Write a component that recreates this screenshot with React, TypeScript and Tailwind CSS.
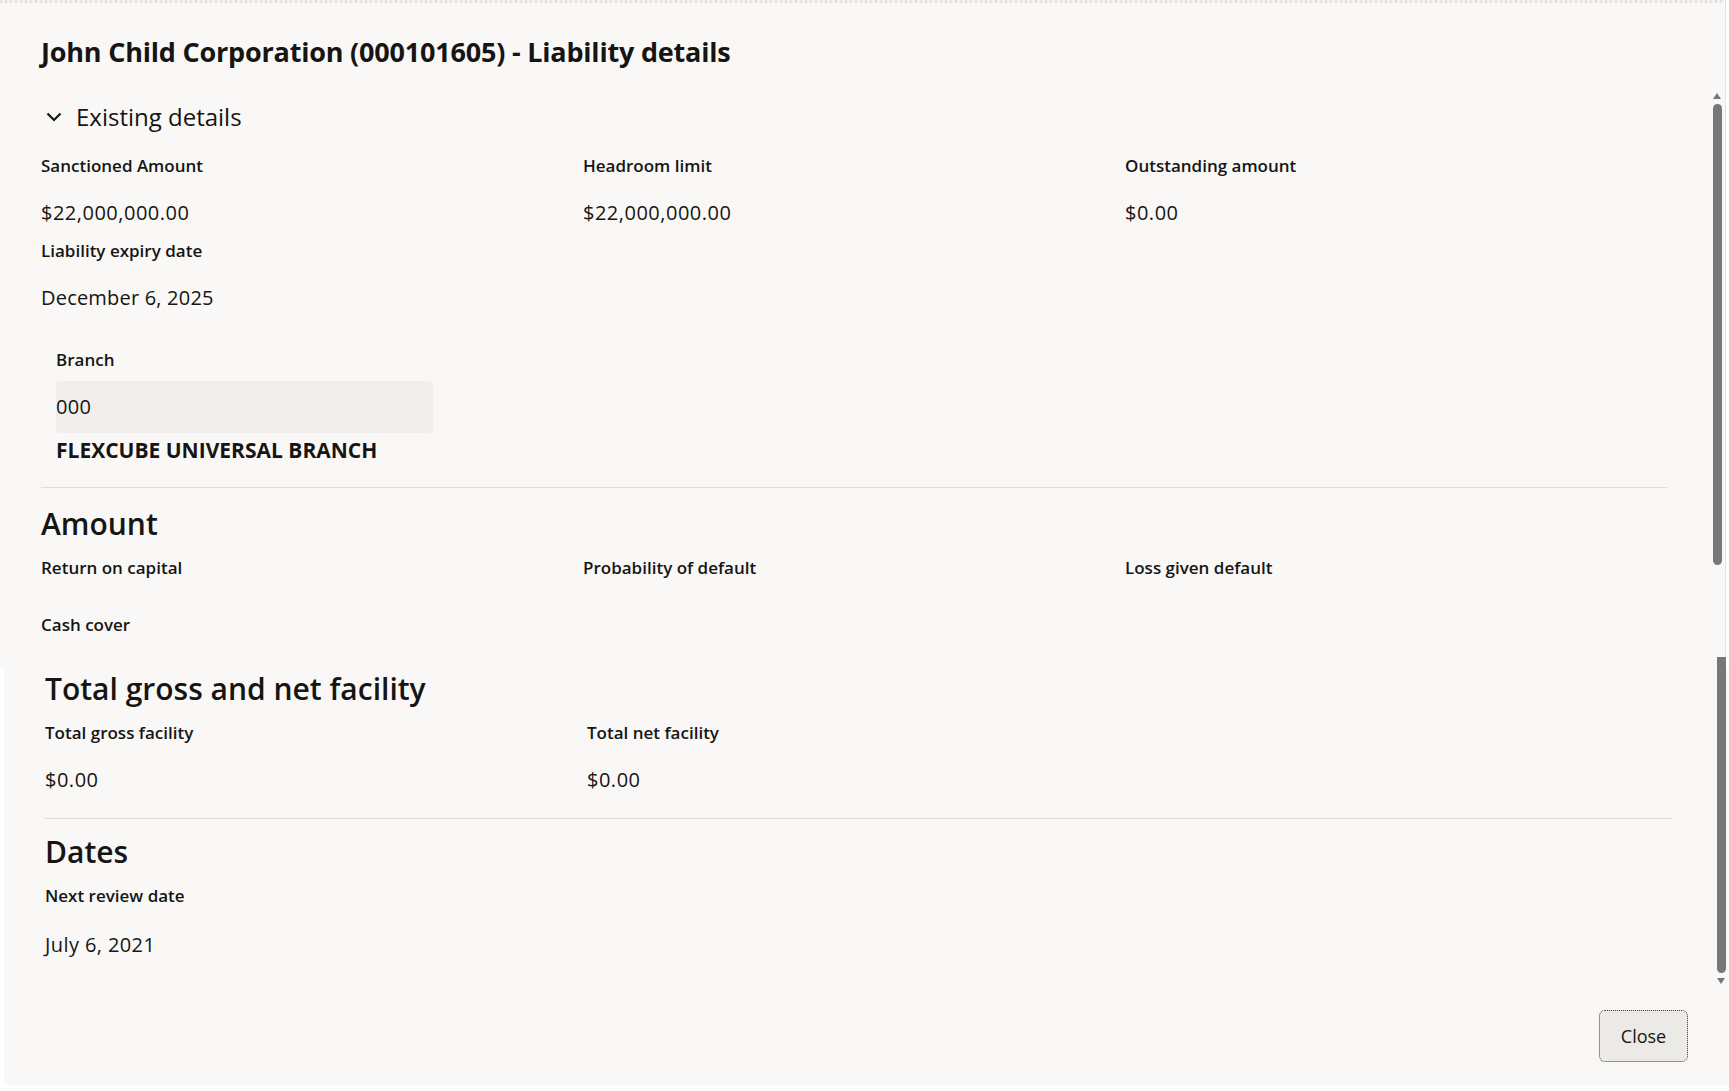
import React from 'react';

type Field = { label: string; value?: string };

const existing: Field[] = [
  { label: 'Sanctioned Amount', value: '$22,000,000.00' },
  { label: 'Headroom limit', value: '$22,000,000.00' },
  { label: 'Outstanding amount', value: '$0.00' },
];

const amount: Field[] = [
  { label: 'Return on capital' },
  { label: 'Probability of default' },
  { label: 'Loss given default' },
];

const FieldCell: React.FC<{ field: Field }> = ({ field }) => (
  <div className="flex flex-col">
    <span className="text-[17px] font-semibold leading-[24px] text-[#161513]">{field.label}</span>
    {field.value !== undefined ? (
      <span className="mt-[23px] text-[20px] tracking-[0.5px] leading-[24px] text-[#161513]">{field.value}</span>
    ) : (
      <span className="h-[33px]" />
    )}
  </div>
);

const App: React.FC = () => {
  return (
    <div className="w-[1729px] h-[1091px] bg-white overflow-hidden font-['Open_Sans',sans-serif] text-[#161513]">
      {/* upper part of the dialog */}
      <div className="relative w-[1726px] h-[669px] bg-[#f9f8f6] border-r border-[#e4e2df] pl-[41px] pr-[58px] pt-[36px]">
        <div className="h-[3px] w-full bg-[repeating-linear-gradient(90deg,#e2e0dd_0px,#e2e0dd_2px,#f4f3f1_2px,#f4f3f1_5px)] absolute left-0 top-0" />
        <h1 className="text-[27px] font-bold leading-[32px] tracking-[-0.2px]">
          John Child Corporation (000101605) - Liability details
        </h1>

        <div className="mt-[33px] flex items-center gap-[12px] h-[32px]">
          <svg width="20" height="20" viewBox="0 0 20 20" className="ml-[3px]">
            <path d="M3.5 6.5l6.5 6.5 6.5-6.5" fill="none" stroke="#161513" strokeWidth="2.2" />
          </svg>
          <span className="text-[24px] leading-[32px]">Existing details</span>
        </div>

        <div className="mt-[21px] grid grid-cols-3 w-[1626px]">
          {existing.map((f) => (
            <FieldCell key={f.label} field={f} />
          ))}
        </div>
        <div className="mt-[14px] flex flex-col">
          <span className="text-[17px] font-semibold leading-[24px]">Liability expiry date</span>
          <span className="mt-[23px] text-[20px] tracking-[0.2px] leading-[24px]">December 6, 2025</span>
        </div>

        <div className="ml-[15px] mt-[38px] flex flex-col">
          <span className="text-[17px] font-semibold leading-[24px]">Branch</span>
          <div className="mt-[9px] w-[377px] h-[52px] rounded-[4px] bg-[#f1efed] flex items-center text-[20px] tracking-[0.3px]">
            000
          </div>
          <span className="mt-[5px] text-[21px] font-bold leading-[24px]">FLEXCUBE UNIVERSAL BRANCH</span>
        </div>

        <div className="mt-[25px] border-t border-[#dfddda] w-[1626px]" />

        <h2 className="mt-[16px] text-[30px] font-semibold leading-[40px]">Amount</h2>
        <div className="mt-[12px] grid grid-cols-3 w-[1626px]">
          {amount.map((f) => (
            <FieldCell key={f.label} field={f} />
          ))}
        </div>
        <div>
          <span className="text-[17px] font-semibold leading-[24px]">Cash cover</span>
        </div>

        {/* scroll thumb */}
        <div className="absolute right-[3px] top-[92px] flex flex-col items-center w-[10px]">
          <svg width="10" height="8" viewBox="0 0 10 8">
            <path d="M5 1l4 6H1z" fill="#777" />
          </svg>
          <div className="mt-[4px] w-[9px] h-[461px] rounded-full bg-[#777777]" />
        </div>
      </div>

      {/* lower part of the dialog */}
      <div className="relative ml-[4px] w-[1725px] h-[416px] bg-[#f9f8f6] pl-[41px] pr-[54px]">
        <h2 className="text-[30px] font-semibold leading-[40px]">Total gross and net facility</h2>
        <div className="mt-[12px] grid grid-cols-3 w-[1626px]">
          <FieldCell field={{ label: 'Total gross facility', value: '$0.00' }} />
          <FieldCell field={{ label: 'Total net facility', value: '$0.00' }} />
        </div>
        <div className="mt-[26px] border-t border-[#dfddda] w-[1627px]" />
        <h2 className="mt-[13px] text-[30px] font-semibold leading-[40px]">Dates</h2>
        <div className="mt-[12px] flex flex-col">
          <span className="text-[17px] font-semibold leading-[24px]">Next review date</span>
          <span className="mt-[25px] text-[20px] tracking-[0.4px] leading-[24px]">July 6, 2021</span>
        </div>

        <div className="absolute right-[41px] top-[341px]">
          <button className="w-[89px] h-[52px] rounded-[6px] bg-[#ebeae7] border border-dotted border-[#3a3835] text-[18px] font-medium text-[#161513]">
            Close
          </button>
        </div>

        {/* scroll thumb */}
        <div className="absolute right-[3px] top-[-12px] flex flex-col items-center w-[10px]">
          <div className="w-[9px] h-[316px] rounded-b-full bg-[#777777]" />
          <svg width="10" height="8" viewBox="0 0 10 8" className="mt-[4px]">
            <path d="M1 1h8L5 7z" fill="#777" />
          </svg>
        </div>
      </div>
    </div>
  );
};

export default App;
